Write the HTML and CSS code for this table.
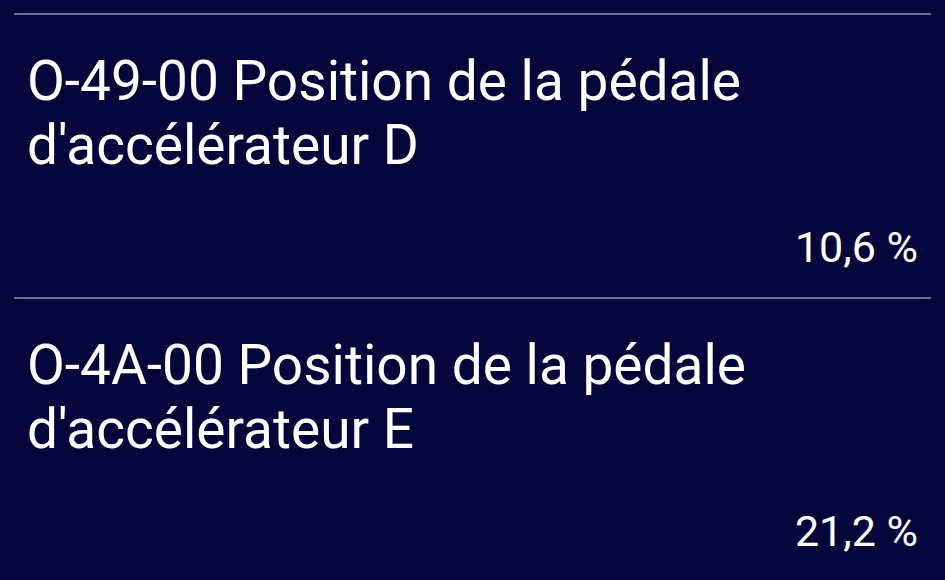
FILE: index.html
```html
<!DOCTYPE html>
<html lang="fr">
<head>
<meta charset="UTF-8">
<meta name="viewport" content="width=device-width, initial-scale=1.0">
<title>Valeurs</title>
<link rel="stylesheet" href="styles.css">
</head>
<body>
<div class="list">
  <div class="item">
    <div class="label">O-49-00 Position de la pédale d'accélérateur D</div>
    <div class="value">10,6 %</div>
  </div>
  <div class="item">
    <div class="label">O-4A-00 Position de la pédale d'accélérateur E</div>
    <div class="value">21,2 %</div>
  </div>
</div>
</body>
</html>
```

FILE: styles.css
```css
body {
  margin: 0;
  padding: 0;
  background-color: #03053b;
  font-family: Roboto, "Noto Sans", sans-serif;
  color: #fff;
  height: 100vh;
  overflow: hidden;
}
.list {
  padding: 13px 14px 0;
}
.item {
  box-sizing: border-box;
  border-top: 2px solid #6b6f8e;
  padding: 34px 13px 0;
  height: 284px;
}
.label {
  font-size: 55px;
  line-height: 64px;
  padding-right: 150px;
}
.value {
  font-size: 43px;
  line-height: 50px;
  text-align: right;
  margin-top: 45px;
}
```
